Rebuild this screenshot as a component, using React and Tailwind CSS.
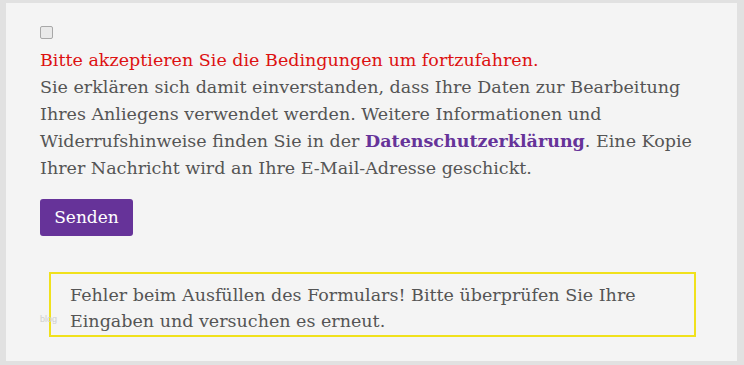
import React from 'react';

function App() {
  return (
    <div className="w-[744px] h-[365px] bg-[#e1e1e1] pt-[3px] pl-[6px] pr-[7px] pb-[4px]">
      <div className="h-full bg-[#f4f4f4] pl-[34px] pt-[23px] text-[#555] text-[17.5px] leading-[27px] font-['DejaVu_Serif',serif]">
        <input type="checkbox" className="block w-[13px] h-[13px] m-0 appearance-none border border-[#a8a8a8] rounded-[2px] bg-[#e9e9e9]" />
        <p className="mt-[8px] text-[#dd1111]">Bitte akzeptieren Sie die Bedingungen um fortzufahren.</p>
        <p className="w-[665px]">
          Sie erklären sich damit einverstanden, dass Ihre Daten zur Bearbeitung Ihres Anliegens verwendet werden. Weitere Informationen und Widerrufshinweise finden Sie in der{' '}
          <a href="#" className="font-bold text-[#663399]">Datenschutzerklärung</a>. Eine Kopie Ihrer Nachricht wird an Ihre E-Mail-Adresse geschickt.
        </p>
        <button className="mt-[17px] w-[93px] h-[37px] rounded-[3px] bg-[#663399] text-white text-[17px]">Senden</button>
        <div className="relative mt-[36px] ml-[9px] w-[647px] h-[65px] border-2 border-[#f0e11c] pl-[19px] pr-[19px] pt-[8px] leading-[26px]">
          Fehler beim Ausfüllen des Formulars! Bitte überprüfen Sie Ihre Eingaben und versuchen es erneut.
          <span className="absolute left-[-11px] top-[40px] text-[9px] leading-[10px] text-[#cfcfcf] font-['Liberation_Sans',sans-serif]">blog</span>
        </div>
      </div>
    </div>
  );
}

export default App;
